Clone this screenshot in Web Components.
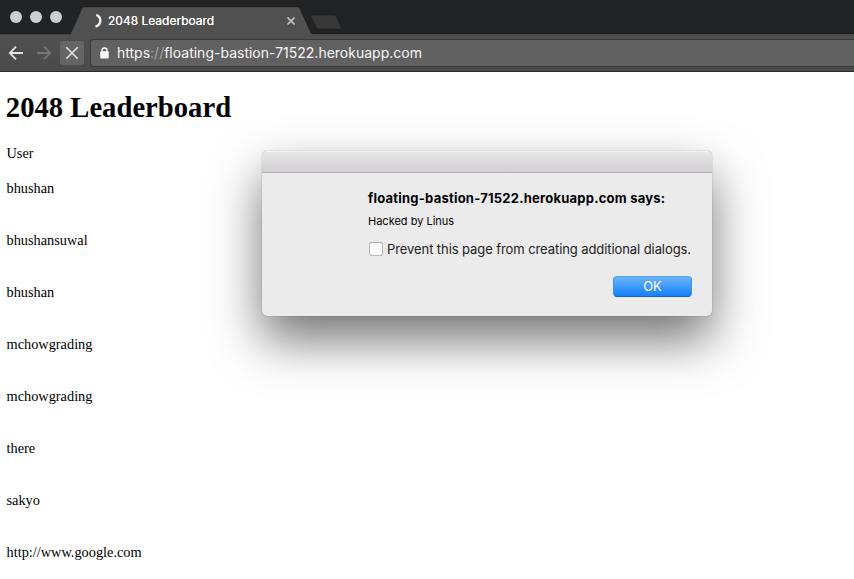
<!DOCTYPE html>
<html lang="en"><head><meta charset="utf-8"><title>2048 Leaderboard</title>
<style>html,body{margin:0;height:100%;overflow:hidden;background:#fff}</style></head>
<body>
<browser-window>
  <tab-strip slot="chrome"><browser-tab>2048 Leaderboard</browser-tab></tab-strip>
  <nav-bar slot="chrome"><span slot="scheme">https</span><span slot="host">floating-bastion-71522.herokuapp.com</span></nav-bar>
  <leader-board>
    <span slot="title">2048 Leaderboard</span><span slot="label">User</span>
    <board-user>bhushan</board-user><board-user>bhushansuwal</board-user><board-user>bhushan</board-user><board-user>mchowgrading</board-user><board-user>mchowgrading</board-user><board-user>there</board-user><board-user>sakyo</board-user><board-user>http://www.google.com</board-user>
  </leader-board>
  <alert-dialog slot="dialog">
    <span slot="title">floating-bastion-71522.herokuapp.com says:</span>
    <span slot="message">Hacked by Linus</span>
    <check-option>Prevent this page from creating additional dialogs.</check-option>
    <push-button slot="action">OK</push-button>
  </alert-dialog>
</browser-window>
<script>
const define = (name, html) => {
  const t = document.createElement('template');
  t.innerHTML = html;
  customElements.define(name, class extends HTMLElement {
    constructor() { super(); this.attachShadow({mode: 'open'}).append(t.content.cloneNode(true)); }
  });
};
define('browser-window', `<style>
  :host{display:flex;flex-direction:column;position:relative;width:854px;height:579px;overflow:hidden;background:#fff}
</style><slot name="chrome"></slot><slot></slot><slot name="dialog"></slot>`);

define('tab-strip', `<style>
  :host{display:flex;height:35px;box-sizing:border-box;background:linear-gradient(#212324 33px,#191a1a 34px,#191a1a 34px,#474747 34px)}
  .lights{display:flex;gap:8px;padding:11px 0 0 10px;width:60px;box-sizing:border-box}
  i{width:12px;height:12px;border-radius:50%;background:#cecece;flex:none}
  svg{display:block;margin:14px 0 0 -9px}
</style><div class="lights"><i></i><i></i><i></i></div><slot></slot>
<svg width="34" height="16"><path d="M1.5 1H24Q25.5 1 26.2 2.5L31 13Q31.5 15 29.5 15H8.5Q7 15 6.3 13.5L.8 3Q0 1 1.5 1Z" fill="#383838" stroke="#1b1c1c" stroke-width=".6"/></svg>`);

define('browser-tab', `<style>
  :host{display:grid;width:259px;height:35px;font:12px/15px Inter,sans-serif;color:#fff;text-shadow:0 0 .2px #fff}
  svg,.row{grid-area:1/1}
  .row{display:flex;align-items:flex-start;padding:13px 0 0 34px}
  .spin{margin:0 6px 0 0;flex:none}.x{margin:3px 23px 0 auto;flex:none}
</style>
<svg width="259" height="35"><path d="M9.500 35L21.600 8.300Q22.400 6.800 24 6.800H237.500Q239.200 6.800 240 8.300L251.300 33Q252.200 34.500 254 34.500V35Z" fill="#505050"/><path d="M10 34.500L22 8.300Q22.600 6.700 24 6.700H237.500Q239.200 6.700 240 8.300L251.300 33.500" fill="none" stroke="#161717" stroke-width=".8"/></svg>
<div class="row"><svg class="spin" width="8" height="15" viewBox="0 0 8 15"><path d="M2.300 1.900C7.800 4.200 7.800 11.600 1.500 13.600" fill="none" stroke="#ededed" stroke-width="2.400"/></svg><slot></slot>
<svg class="x" width="10" height="10" viewBox="0 0 10 10"><path d="M1.500 1.500L8.500 8.500M8.500 1.500L1.500 8.500" stroke="#c8c8c8" stroke-width="1.7"/></svg></div>`);

define('nav-bar', `<style>
  :host{display:flex;height:37px;box-sizing:border-box;padding:4px 0 5px 8px;background:linear-gradient(#505050,#4b4b4b);border-bottom:1px solid #2b292b;font:14px/17px Inter,sans-serif;color:#f7f7f7}
  svg{display:block;flex:none}
  .nav{margin-top:6px}.fwd{margin-left:12px}
  .stop{width:24px;height:24px;margin:2px 6px 0 8px;background:#656565;border-radius:2px;flex:none}
  .box{flex:1;display:flex;height:28px;box-sizing:border-box;border:1px solid #3a3a3a;border-right:0;border-radius:3px 0 0 3px;background:#616161;padding:4px 0 0 9px}
  .lock{margin:3px 8px 0 0}.sep{color:#a4a4a4}
</style>
<svg class="nav" width="16" height="16" viewBox="0 0 16 16"><path d="M15 8H2M8 1.700L1.800 8L8 14.300" fill="none" stroke="#e3e3e3" stroke-width="1.800"/></svg>
<svg class="nav fwd" width="16" height="16" viewBox="0 0 16 16"><path d="M1 8H14M8 1.700L14.200 8L8 14.300" fill="none" stroke="#767676" stroke-width="1.800"/></svg>
<svg class="stop" width="24" height="24" viewBox="0 0 24 24"><path d="M6.300 6.300L17.700 17.700M17.700 6.300L6.300 17.700" stroke="#e3e3e3" stroke-width="1.600"/></svg>
<div class="box"><svg class="lock" width="9" height="12" viewBox="0 0 9 12"><rect x=".3" y="4.200" width="8.400" height="7.300" rx=".8" fill="#fff"/><path d="M2 5V3.200Q2 1 4.500 1T7 3.200V5" fill="none" stroke="#fff" stroke-width="1.300"/></svg><slot name="scheme"></slot><span class="sep">://</span><slot name="host"></slot></div>`);

define('leader-board', `<style>
  :host{display:flex;flex-direction:column;flex:1;padding:19px 6px 0 6.500px;color:#000;font:14.33px/16px "Liberation Serif",serif}
  h1{margin:0 0 22px -.7px;font-size:28.66px;line-height:32px}
  .label{margin-bottom:19px}
  .users{display:flex;flex-direction:column;gap:36px}
</style><h1><slot name="title"></slot></h1><div class="label"><slot name="label"></slot></div><div class="users"><slot></slot></div>`);
define('board-user', `<style>:host{display:block;height:16px}</style><slot></slot>`);

define('alert-dialog', `<style>
  :host{position:absolute;left:262px;top:151px;width:450px;height:165px;border-radius:5px;background:#ebebeb;box-shadow:0 0 1px 0 rgba(0,0,0,.55),0 24px 50px rgba(0,0,0,.55);font:13px/16px Inter,sans-serif;color:#000;overflow:hidden}
  .bar{height:22px;box-sizing:border-box;background:linear-gradient(#e8e6e8,#d1cfd1);border-top:1px solid #f3f2f3;border-bottom:1px solid #b2b0b2}
  .body{display:flex;flex-direction:column;padding:17px 20px 0 106px}
  .title{font-weight:700;letter-spacing:.23px;white-space:nowrap}
  .msg{font-size:11px;line-height:14px;margin:8px 0 13px}
  .actions{display:flex;justify-content:flex-end;margin-top:19px}
</style><div class="bar"></div><div class="body"><div class="title"><slot name="title"></slot></div><div class="msg"><slot name="message"></slot></div><slot></slot><div class="actions"><slot name="action"></slot></div></div>`);

define('check-option', `<style>
  :host{display:flex;height:16px;letter-spacing:-.082px;white-space:nowrap;color:#222}
  i{width:14px;height:14px;box-sizing:border-box;border:1px solid #b9b9b9;border-top-color:#a9a9a9;border-radius:3px;background:#fff;margin:1px 4px 0 1px;flex:none}
</style><i></i><slot></slot>`);

define('push-button', `<style>
  :host{display:flex;justify-content:center;width:79px;height:21px;box-sizing:border-box;padding-top:1px;border:1px solid #3e94f1;border-top-color:#57a6f2;border-bottom-color:#0e61f0;border-radius:4px;background:linear-gradient(#6bb3f8,#1580fb);color:#fff;letter-spacing:-.2px}
</style><slot></slot>`);
</script></body></html>
